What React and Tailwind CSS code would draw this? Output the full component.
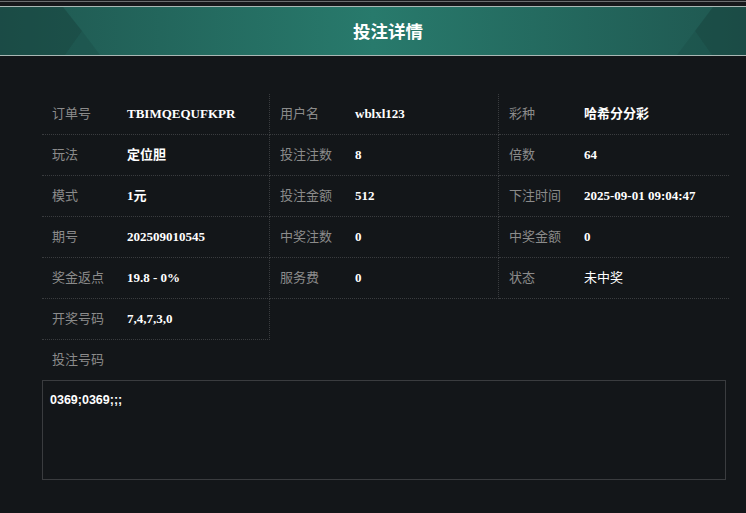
const rows = [
  ["订单号", "TBIMQEQUFKPR"],
  ["用户名", "wblxl123"],
  ["彩种", "哈希分分彩"],
  ["玩法", "定位胆"],
  ["投注注数", "8"],
  ["倍数", "64"],
  ["模式", "1元"],
  ["投注金额", "512"],
  ["下注时间", "2025-09-01 09:04:47"],
  ["期号", "202509010545"],
  ["中奖注数", "0"],
  ["中奖金额", "0"],
  ["奖金返点", "19.8 - 0%"],
  ["服务费", "0"],
  ["状态", "未中奖", true],
  ["开奖号码", "7,4,7,3,0"],
];

function Cell({ label, value, light, col }) {
  return (
    <div
      className={`flex h-[41px] items-center border-b border-dotted border-[#3a3c3f] pl-[10px] ${
        col < 2 ? "border-r" : ""
      }`}
    >
      <span className="w-[75px] shrink-0 text-[13px] text-[#8b8b8b] font-['Liberation_Sans','Noto_Sans_CJK_SC',sans-serif]">
        {label}
      </span>
      <span
        className={`text-[13px] text-white font-['Liberation_Serif','Noto_Sans_CJK_SC',serif] ${
          light ? "font-normal" : "font-bold"
        }`}
      >
        {value}
      </span>
    </div>
  );
}

export default function App() {
  return (
    <div className="min-h-[513px] w-[746px] bg-[#131619]">
      <div className="h-px bg-[#1b1d20]" />
      <div className="h-px bg-[#6b6e70]" />
      <div className="h-1 bg-[#16181b]" />
      <header className="relative flex h-[50px] items-center justify-center overflow-hidden border-y border-[#a9b7b4] bg-[linear-gradient(90deg,#1f5750_0%,#287a6c_50%,#1f5750_100%)]">
        <svg className="absolute left-0 top-0" width="110" height="48" viewBox="0 0 110 48">
          <polygon points="0,0 63,0 82,24 65,48 0,48" fill="#173f3a" fillOpacity="0.45" />
          <polygon points="82,24 100,48 65,48" fill="#1a4a44" fillOpacity="0.35" />
        </svg>
        <svg className="absolute right-0 top-0" width="80" height="48" viewBox="0 0 80 48">
          <polygon points="80,0 47,0 29,24 46,48 80,48" fill="#173f3a" fillOpacity="0.45" />
          <polygon points="29,24 11,48 46,48" fill="#1a4a44" fillOpacity="0.35" />
        </svg>
        <h1 className="relative ml-[30px] text-[17.5px] font-bold text-white font-['Noto_Sans_CJK_SC',sans-serif]">
          投注详情
        </h1>
      </header>

      <div className="pl-[42px] pt-[38px]">
        <div className="grid w-[687px] grid-cols-[228px_229px_230px]">
          {rows.map(([label, value, light], i) => (
            <Cell key={label} label={label} value={value} light={light} col={i % 3} />
          ))}
        </div>

        <div className="flex h-[40px] items-center pl-[10px] text-[13px] text-[#8b8b8b] font-['Liberation_Sans','Noto_Sans_CJK_SC',sans-serif]">
          投注号码
        </div>

        <div className="h-[100px] w-[684px] border border-[#3a3c3f] px-[7px] pt-[10px]">
          <p className="text-[12.5px] font-bold text-white font-['Liberation_Sans',sans-serif]">
            0369;0369;;;
          </p>
        </div>
      </div>
    </div>
  );
}
